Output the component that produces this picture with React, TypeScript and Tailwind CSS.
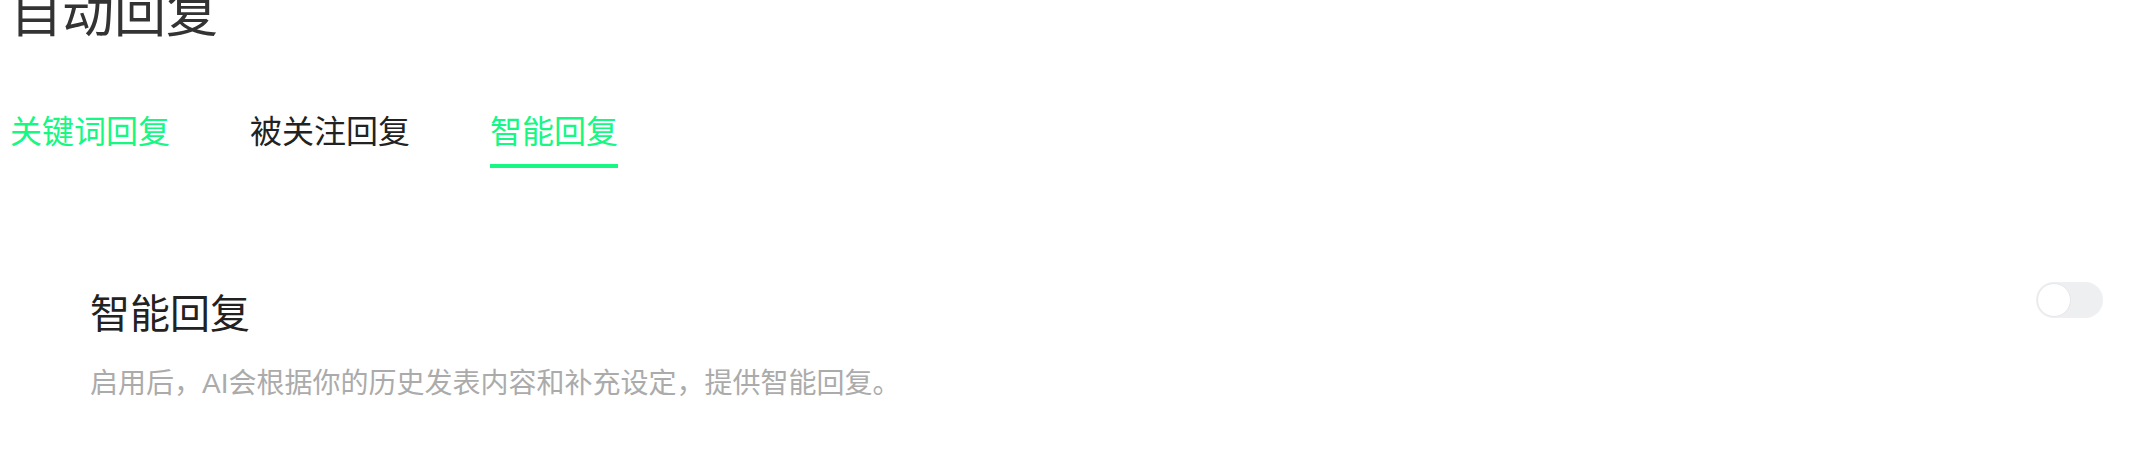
import { useState } from 'react';

const tabs = ['关键词回复', '被关注回复', '智能回复'];

const font = { fontFamily: '"Liberation Sans", "Noto Sans CJK SC", sans-serif' };

export default function App() {
  const [active, setActive] = useState(2);
  const [enabled, setEnabled] = useState(false);

  return (
    <div className="min-h-[473px] bg-white px-[10px] overflow-hidden" style={font}>
      <h1 className="mt-[-12px] text-[52px] leading-[52px] text-[#333333]">自动回复</h1>

      {/* Tabs */}
      <div className="mt-[76px] flex gap-[80px]">
        {tabs.map((tab, i) => (
          <button
            key={tab}
            onClick={() => setActive(i)}
            className={`flex flex-col items-stretch text-[32px] leading-[32px] ${
              i === 1 ? 'text-[#222222]' : 'text-[#16f783]'
            }`}
          >
            <span>{tab}</span>
            <span className={`mt-[16px] h-[4px] ${i === active ? 'bg-[#16f783]' : 'bg-transparent'}`} />
          </button>
        ))}
      </div>

      {/* Smart reply setting */}
      <div className="mt-[114px] flex items-start justify-between pl-[80px] pr-[28px]">
        <div className="pt-[12px]">
          <h2 className="text-[40px] leading-[40px] text-[#222222]">智能回复</h2>
          <p className="mt-[36px] text-[28px] leading-[28px] text-[#ababab]">
            启用后，AI会根据你的历史发表内容和补充设定，提供智能回复。
          </p>
        </div>
        <button
          onClick={() => setEnabled(!enabled)}
          className={`flex h-[36px] w-[67px] items-center rounded-full p-[1px] transition-colors ${
            enabled ? 'justify-end bg-[#16f783]' : 'justify-start bg-[#eeeff1]'
          }`}
          aria-label="智能回复开关"
        >
          <span className="h-[34px] w-[34px] rounded-full border border-[#e6e7ea] bg-white" />
        </button>
      </div>
    </div>
  );
}
